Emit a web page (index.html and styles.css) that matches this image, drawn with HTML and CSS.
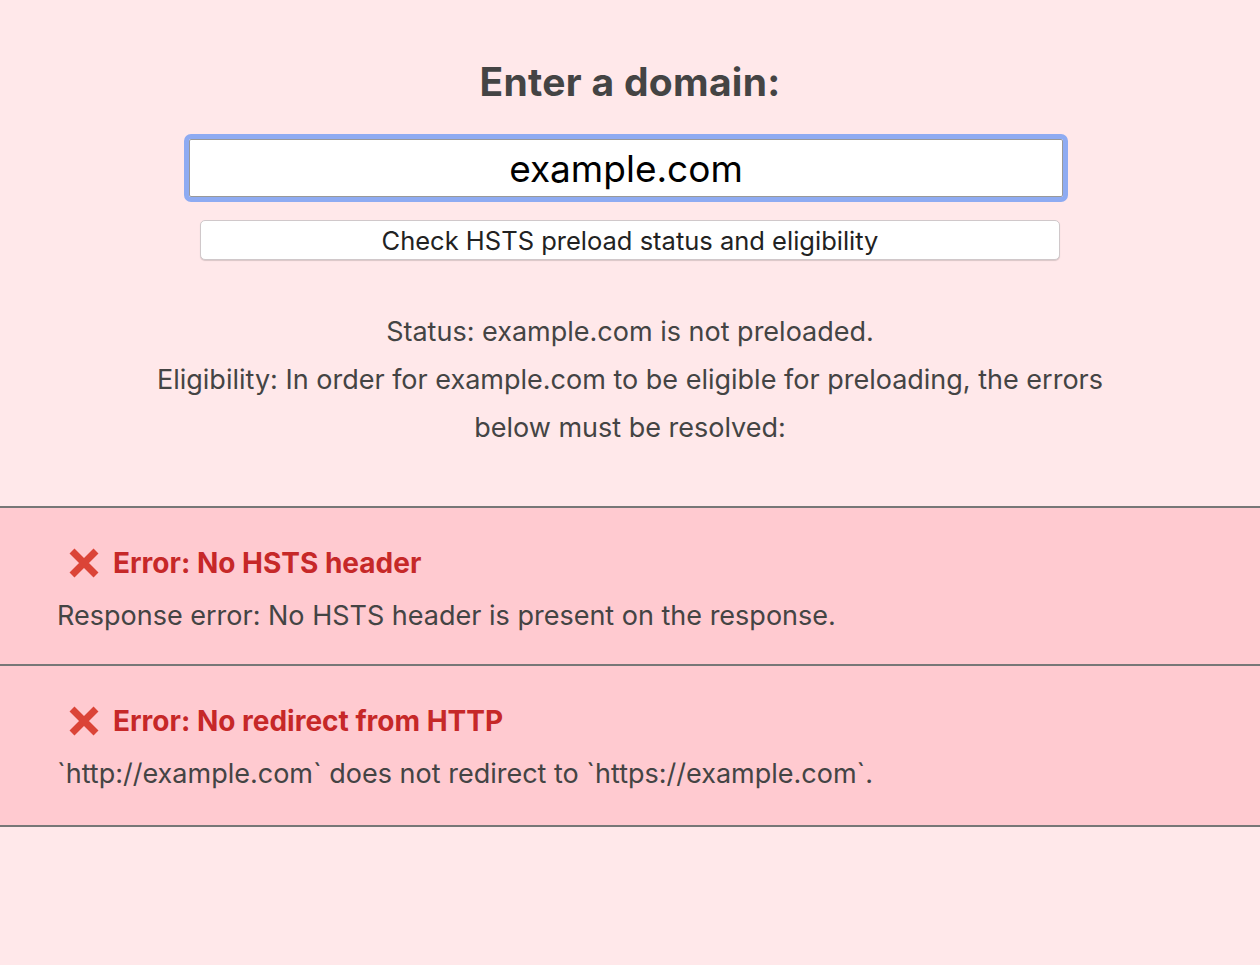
FILE: index.html
```html
<!DOCTYPE html>
<html lang="en">
<head>
    <meta charset="UTF-8">
    <title>HSTS Preload List Submission</title>
    <link rel="stylesheet" href="styles.css">
</head>
<body>
    <main class="checker">
        <h1>Enter a domain:</h1>
        <form class="domain-form">
            <input class="domain-input" type="text" value="example.com">
            <button class="check-button" type="button">Check HSTS preload status and eligibility</button>
        </form>
        <div class="summary">
            <p>Status: example.com is not preloaded.</p>
            <p>Eligibility: In order for example.com to be eligible for preloading, the errors below must be resolved:</p>
        </div>
    </main>

    <section class="issues">
        <article class="issue">
            <h2><span class="cross"><svg viewBox="0 0 32 32" width="32" height="32"><path d="M4 4 L28 28 M28 4 L4 28" stroke="#db4437" stroke-width="7"/></svg></span>Error: No HSTS header</h2>
            <p>Response error: No HSTS header is present on the response.</p>
        </article>
        <article class="issue">
            <h2><span class="cross"><svg viewBox="0 0 32 32" width="32" height="32"><path d="M4 4 L28 28 M28 4 L4 28" stroke="#db4437" stroke-width="7"/></svg></span>Error: No redirect from HTTP</h2>
            <p>`http://example.com` does not redirect to `https://example.com`.</p>
        </article>
    </section>
</body>
</html>
```

FILE: styles.css
```css
body {
    margin: 0;
    background-color: #ffe8ea;
    color: #444;
    font-family: Inter, "Liberation Sans", sans-serif;
}

.checker {
    width: 980px;
    margin: 0 auto;
    padding-top: 58px;
    text-align: center;
}

h1 {
    margin: 0;
    font-size: 39px;
    font-weight: bold;
    letter-spacing: 0.3px;
    color: #444;
    line-height: 48px;
}

.domain-form {
    display: flex;
    flex-direction: column;
    align-items: center;
    margin-top: 33px;
}

.domain-input {
    box-sizing: border-box;
    width: 874px;
    height: 58px;
    margin: 0 0 0 -8px;
    border: 1px solid #999;
    outline: 5px solid #8eabf2;
    border-radius: 2px;
    background: white;
    color: black;
    font-family: inherit;
    font-size: 37px;
    text-align: center;
}

.check-button {
    width: 860px;
    height: 40px;
    margin-top: 23px;
    border: 1px solid #d0c8ca;
    border-radius: 5px;
    background: white;
    box-shadow: 0 1px 1px rgba(0, 0, 0, 0.15);
    color: #222;
    font-family: inherit;
    font-size: 25.5px;
}

.summary {
    width: 960px;
    margin: 48px auto 0;
    padding-bottom: 54px;
    font-size: 27px;
    line-height: 48px;

    p { margin: 0; }
}

.issues {
    border-bottom: 2px solid #777;
}

.issue {
    padding: 35px 57px 30px;
    background: #ffcad0;
    border-top: 2px solid #777;

    h2 {
        display: flex;
        align-items: center;
        margin: 0 0 15px 11px;
        font-size: 28px;
        line-height: 40px;
        color: #c62828;
    }

    p {
        margin: 0;
        font-size: 27px;
        line-height: 36px;
    }
}

.issue:last-child {
    padding-bottom: 33px;
}

.cross {
    display: flex;
    margin-right: 13px;
}
```
